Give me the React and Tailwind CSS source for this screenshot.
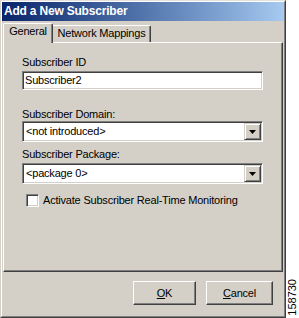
const font = "font-['Liberation_Sans',Arial,sans-serif]";

const raised =
  "border border-t-white border-l-white border-r-[#404040] border-b-[#404040] shadow-[inset_-1px_-1px_0_#808080]";
const sunken =
  "border border-t-[#808080] border-l-[#808080] border-r-white border-b-white shadow-[inset_1px_1px_0_#404040,inset_-1px_-1px_0_#d4d0c8]";

const Label = ({ children, className = "" }) => (
  <div className={`h-[13px] leading-[13px] ${className}`}>{children}</div>
);

const Combo = ({ value, className = "" }) => (
  <div className={`${sunken} bg-white w-[241px] h-[21px] flex items-center p-[1px] ${className}`}>
    <div className="flex-1 pl-[2px] leading-[13px]">{value}</div>
    <div className="w-[17px] h-[17px] bg-[#d4d0c8] border border-t-[#d4d0c8] border-l-[#d4d0c8] border-r-[#404040] border-b-[#404040] shadow-[inset_1px_1px_0_#fff,inset_-1px_-1px_0_#808080] flex items-center justify-center">
      <svg width="7" height="4" viewBox="0 0 7 4">
        <polygon points="0,0 7,0 3.5,4" fill="#000" />
      </svg>
    </div>
  </div>
);

const Button = ({ children, width }) => (
  <div
    className={`${raised} h-[24px] ${width} flex items-center justify-center leading-[13px] bg-[#d4d0c8]`}
  >
    {children}
  </div>
);

export default function App() {
  return (
    <div className={`w-[299px] h-[318px] bg-white flex ${font} text-[11px] tracking-[-0.2px] text-black`}>
      <div className="w-[286px] h-[318px] border border-t-[#e4e2dc] border-l-[#d4d0c8] border-r-[#404040] border-b-[#404040]">
        <div className="w-full h-full border border-t-white border-l-white border-r-[#808080] border-b-[#808080] bg-[#d4d0c8] flex flex-col">
          {/* title bar */}
          <div className="h-[19px] shrink-0 bg-linear-to-r from-[#0a246a] to-[#a6caf0] pl-[2px] pt-[2px] text-white font-bold text-[12px] tracking-[-0.2px] leading-[15px]">
            Add a New Subscriber
          </div>

          {/* tabs */}
          <div className="h-[21px] shrink-0 flex items-end pl-[1px]">
            <div className="relative z-10 -mb-px w-[50px] h-[20px] bg-[#d4d0c8] border-t border-l border-r border-t-white border-l-white border-r-[#404040] shadow-[inset_-1px_0_0_#808080] rounded-t-[2px] flex justify-center pt-[1px] leading-[13px]">
              General
            </div>
            <div className="w-[98px] h-[17px] border-t border-r border-t-white border-r-[#404040] shadow-[inset_-1px_0_0_#808080] rounded-tr-[2px] flex justify-center pt-[1px] leading-[13px]">
              Network Mappings
            </div>
          </div>

          {/* panel */}
          <div className="mx-[1px] h-[230px] shrink-0 border border-t-white border-l-white border-r-[#404040] border-b-[#404040] shadow-[inset_-1px_-1px_0_#808080] pl-[18px] flex flex-col">
            <Label className="mt-[13px]">Subscriber ID</Label>
            <div className={`${sunken} bg-white w-[241px] h-[19px] mt-[2px] flex items-center pl-[2px] leading-[13px]`}>
              Subscriber2
            </div>

            <Label className="mt-[18px]">Subscriber Domain:</Label>
            <Combo value="<not introduced>" />

            <Label className="mt-[6px]">Subscriber Package:</Label>
            <Combo value="<package 0>" className="mt-[2px]" />

            <div className="mt-[10px] flex items-center pl-[4px] gap-[4px]">
              <div className={`${sunken} bg-white w-[13px] h-[13px]`} />
              <div className="leading-[13px]">Activate Subscriber Real-Time Monitoring</div>
            </div>
          </div>

          {/* buttons */}
          <div className="mt-[9px] flex justify-end gap-[10px] pr-[11px]">
            <Button width="w-[63px]">
              <span>
                <span className="underline">O</span>K
              </span>
            </Button>
            <Button width="w-[67px]">
              <span>
                <span className="underline">C</span>ancel
              </span>
            </Button>
          </div>
        </div>
      </div>

      {/* figure number */}
      <div className="flex-1 flex flex-col justify-end items-center pb-[2px]">
        <div className="[writing-mode:vertical-rl] rotate-180 leading-[11px] tracking-normal">158730</div>
      </div>
    </div>
  );
}
